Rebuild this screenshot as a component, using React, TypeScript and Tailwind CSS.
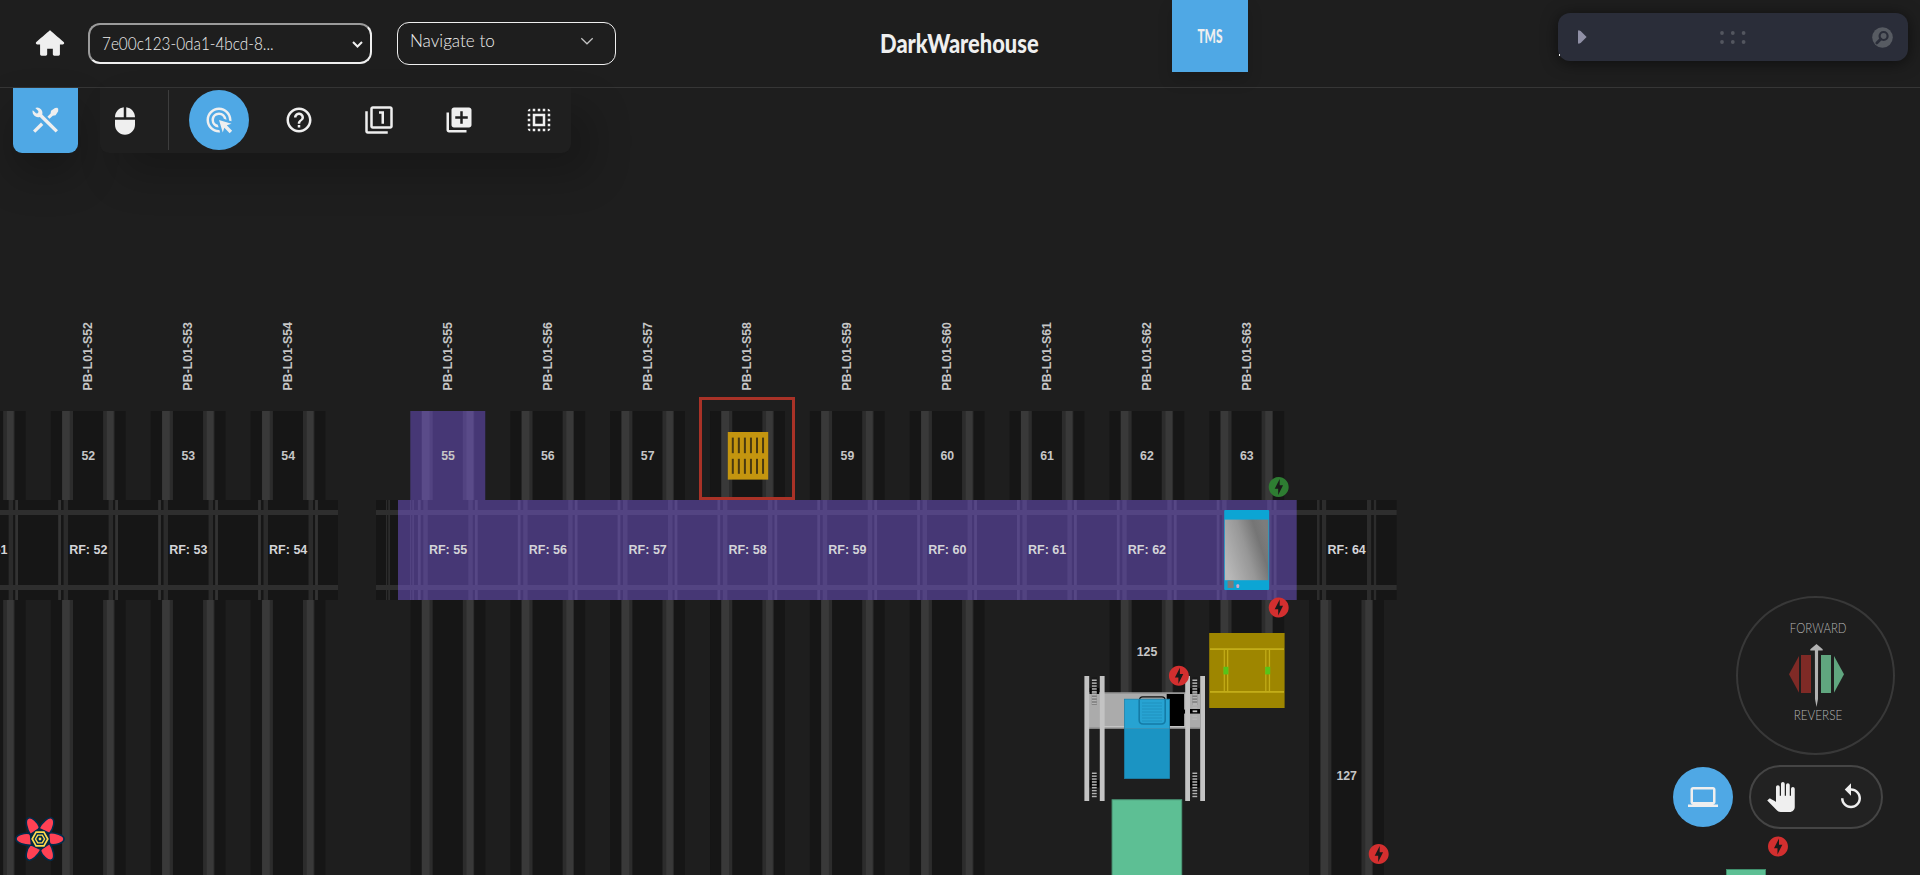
import React from "react";
import {
  MdAddToPhotos,
  MdAdsClick,
  MdHelpOutline,
  MdLaptop,
  MdMouse,
  MdOutlineFilter1,
  MdPanTool,
  MdReplay,
  MdSelectAll,
} from "react-icons/md";
import { TiHome } from "react-icons/ti";

const BOLT =
  "M12 2.02c-5.51 0-9.98 4.47-9.98 9.98s4.47 9.98 9.98 9.98 9.98-4.47 9.98-9.98S17.51 2.02 12 2.02zM11.48 20v-6.26H8L13 4v6.26h3.35L11.48 20z";

const leftSlots = [51, 52, 53, 54].map((n) => ({ n, cx: 88.2 + (n - 52) * 99.95 }));
const rightSlots = [55, 56, 57, 58, 59, 60, 61, 62, 63].map((n) => ({
  n,
  cx: 447.9 + (n - 55) * 99.85,
}));
const slots = [...leftSlots, ...rightSlots];

function Lane({ cx, y, h }: { cx: number; y: number; h: number }) {
  return (
    <g>
      <rect x={cx - 37.4} y={y} width={74.8} height={h} fill="#161616" />
      <rect x={cx - 26.2} y={y} width={11} height={h} fill="#2c2c2c" />
      <rect x={cx - 26} y={y} width={7.6} height={h} fill="#393939" />
      <rect x={cx + 14.9} y={y} width={11.4} height={h} fill="#2c2c2c" />
      <rect x={cx + 18.6} y={y} width={6.7} height={h} fill="#393939" />
    </g>
  );
}

function Crossing({ cx }: { cx: number }) {
  return (
    <g>
      <rect x={cx - 30} y={500} width={2.8} height={100} fill="#333333" />
      <rect x={cx - 24.6} y={500} width={4.5} height={100} fill="#2b2b2b" />
      <rect x={cx + 20.4} y={500} width={4.5} height={100} fill="#2b2b2b" />
      <rect x={cx + 27} y={500} width={2.8} height={100} fill="#333333" />
    </g>
  );
}

function Bolt({ x, y, color }: { x: number; y: number; color: string }) {
  return (
    <g transform={`translate(${x - 12} ${y - 12})`}>
      <circle cx={12} cy={12} r={9} fill="#1a1a1a" />
      <path d={BOLT} fill={color} />
    </g>
  );
}

function Ladder({ x, y, count }: { x: number; y: number; count: number }) {
  return (
    <g>
      {Array.from({ length: count }, (_, i) => (
        <rect key={i} x={x - 2.4} y={y + i * 2.9} width={4.8} height={1.5} fill="#b4b4b4" />
      ))}
    </g>
  );
}

function Hub({ x, y, h }: { x: number; y: number; h: number }) {
  return <rect x={x - 4.8} y={y} width={9.6} height={h} fill="#050505" />;
}

function Vehicle() {
  return (
    <g>
      <rect x={1089} y={692.5} width={111} height={36} fill="#ababab" />
      <rect x={1089} y={692.5} width={111} height={1.2} fill="#8f8f8f" />
      <rect x={1089} y={727.3} width={111} height={1.4} fill="#909090" />
      <rect x={1104} y={726} width={81} height={1.3} fill="#c4c4c4" />
      <rect x={1166.7} y={694} width={17.4} height={32} fill="#000" />
      <rect x={1139.6} y={696.8} width={25.4} height={27.5} rx={3} fill="#a0a0a0" stroke="#111" strokeWidth={1.2} />
      {[1094.3, 1194.8].map((x) => (
        <g key={x}>
          <Hub x={x} y={688} h={6} />
          <Hub x={x} y={780} h={7.5} />
        </g>
      ))}
      <rect x={1091.8} y={677} width={5} height={15} fill="#1a1a1a" />
      <rect x={1192.3} y={677} width={5} height={15} fill="#1a1a1a" />
      {[1094.3, 1194.8].map((x) => (
        <g key={x}>
          <rect x={x - 2.5} y={772} width={5} height={24} fill="#111" />
          <Ladder x={x} y={772.5} count={9} />
          <rect x={x - 2.5} y={692} width={5} height={13} fill="#777" />
          <Ladder x={x} y={679.5} count={9} />
        </g>
      ))}
      <Ladder x={1194.8} y={704} count={6} />
      <rect x={1183.6} y={709.6} width={1.6} height={4} fill="#000" />
      <rect x={1190} y={709} width={10} height={4.6} fill="#000" />
      <rect x={1192.6} y={710.4} width={4.6} height={1.8} fill="#c4c4c4" />
      {[1084.4, 1099.8, 1185.2, 1200.2].map((x) => (
        <rect key={x} x={x} y={676} width={4.8} height={125} fill="#c3c3c3" />
      ))}
      <rect x={1124.6} y={699.2} width={45} height={29.3} fill="#27a3d2" />
      <rect x={1124.6} y={728.5} width={45} height={50} fill="#1b94c3" />
      <rect x={1124.6} y={699.2} width={45} height={79.3} fill="none" stroke="#1b83ad" strokeWidth={0.8} />
      <path
        d="M1139.2 699.6v20.4q0 4 4 4h18q4 0 4-4v-20.4"
        fill="none"
        stroke="#147ba6"
        strokeWidth={1.6}
      />
      <path
        d="M1142 703h20M1142 706h20M1142 709h20M1142 712h20M1142 715h20M1142 718h20M1142 721h20"
        fill="none"
        stroke="#2192bf"
        strokeWidth={1}
      />
    </g>
  );
}

function WarehouseMap() {
  return (
    <svg className="block h-[875px] w-[1920px]" viewBox="0 0 1920 875" fontFamily="'Liberation Sans', Arial, sans-serif">
      <defs>
        <linearGradient id="shuttle" x1="0" y1="0.75" x2="1" y2="0.3">
          <stop offset="0" stopColor="#b9b9b9" />
          <stop offset="0.5" stopColor="#979797" />
          <stop offset="0.8" stopColor="#757575" />
          <stop offset="1" stopColor="#7c7c7c" />
        </linearGradient>
      </defs>

      {slots.map(({ n, cx }) => (
        <Lane key={n} cx={cx} y={411} h={89} />
      ))}
      {slots
        .filter(({ n }) => n <= 60)
        .map(({ n, cx }) => (
          <Lane key={n} cx={cx} y={600} h={275} />
        ))}
      <Lane cx={1146.9} y={600} h={93} />
      <Lane cx={1246.7} y={600} h={34} />
      <Lane cx={1346.6} y={600} h={275} />

      <rect x={0} y={500} width={338} height={100} fill="#161616" />
      <rect x={376} y={500} width={1020.7} height={100} fill="#161616" />
      {slots.map(({ n, cx }) => (
        <Crossing key={n} cx={cx} />
      ))}
      <g fill="#2c2c2c">
        <rect x={386} y={500} width={1.2} height={100} />
        <rect x={388.2} y={500} width={1.8} height={100} />
        <rect x={410} y={500} width={1.2} height={100} />
        <rect x={412.2} y={500} width={1.8} height={100} />
        <rect x={1317} y={500} width={2.6} height={100} />
        <rect x={1322} y={500} width={4.2} height={100} />
        <rect x={1367} y={500} width={4.2} height={100} />
        <rect x={1373.8} y={500} width={2.4} height={100} />
      </g>
      <g fill="#2e2e2e">
        <rect x={0} y={510} width={338} height={5} />
        <rect x={0} y={585} width={338} height={5} />
        <rect x={376} y={510} width={1020.7} height={5} />
        <rect x={376} y={585} width={1020.7} height={5} />
      </g>
      <g fill="#8463f0" fillOpacity={0.44}>
        <rect x={410.3} y={411} width={75} height={89} />
        <rect x={398} y={500} width={898.7} height={100} />
      </g>

      <g fill="#c6c6c6" fontSize={12.3} fontWeight={700}>
        {slots
          .filter(({ n }) => n > 51)
          .map(({ n, cx }) => (
            <g key={n}>
              <text transform={`translate(${cx + 4} 390.4) rotate(-90)`}>{`PB-L01-S${n}`}</text>
              {n !== 58 && (
                <text x={cx + 0.1} y={459.6} textAnchor="middle">
                  {n}
                </text>
              )}
            </g>
          ))}
        <text x={1147} y={656.4} textAnchor="middle">125</text>
        <text x={1346.7} y={779.8} textAnchor="middle">127</text>
      </g>
      <g fill="#d4d4d8" fontSize={12.5} fontWeight={700}>
        {[...slots.filter(({ n }) => n !== 63), { n: 64, cx: 1346.6 }].map(({ n, cx }) => (
          <text key={n} x={cx + 0.1} y={553.7} textAnchor="middle">{`RF: ${n}`}</text>
        ))}
      </g>

      {/* pallet and its selection frame */}
      <rect x={727.8} y={432} width={40.4} height={47.6} fill="#c4950f" />
      {Array.from({ length: 6 }, (_, i) => (
        <g key={i} fill="#4a3a10">
          <rect x={731.8 + i * 6.05} y={437.6} width={2} height={15.6} />
          <rect x={731.8 + i * 6.05} y={458.8} width={2} height={15} />
        </g>
      ))}
      <rect x={700.5} y={398.5} width={93} height={100} fill="none" stroke="#a93227" strokeWidth={3} />

      {/* shuttle */}
      <rect x={1224.2} y={510} width={45} height={80} rx={1} fill="#0ca5d4" />
      <rect x={1224.8} y={519.6} width={43.6} height={60.6} fill="url(#shuttle)" />
      <rect x={1227.6} y={580.6} width={6} height={7.4} fill="#7b7b7b" />
      <rect x={1236.4} y={584.2} width={2.8} height={3.8} rx={1} fill="#d6a9c9" />

      {/* lift */}
      <rect x={1209.2} y={633} width={75.4} height={75} fill="#9e8600" />
      <g fill="#c3ad18">
        <rect x={1210} y={648.2} width={74} height={1.8} />
        <rect x={1210} y={691} width={74} height={1.8} />
        <rect x={1223.7} y={650} width={1.2} height={41} />
        <rect x={1227} y={650} width={1.3} height={41} />
        <rect x={1265.2} y={650} width={1.2} height={41} />
        <rect x={1268.8} y={650} width={1.3} height={41} />
      </g>
      <rect x={1223.4} y={666.8} width={5} height={7.6} fill="#56c41a" />
      <rect x={1265.2} y={666.8} width={5} height={7.6} fill="#56c41a" />

      <Vehicle />
      <rect x={1112.1} y={799.8} width={69.6} height={80} fill="#5dbf94" stroke="#4d9c7a" strokeWidth={1} />
      <rect x={1726.5} y={869.5} width={39} height={10} fill="#5dbf94" stroke="#3f8f6c" strokeWidth={1} />

      <Bolt x={1278.7} y={487} color="#2e7d32" />
      <Bolt x={1278.7} y={607.6} color="#d32f2f" />
      <Bolt x={1178.9} y={675.7} color="#d32f2f" />
      <Bolt x={1378.7} y={854} color="#d32f2f" />
      <Bolt x={1778} y={846.4} color="#d32f2f" />
    </svg>
  );
}

function Header() {
  return (
    <header className="flex h-[88px] items-start border-b border-[#363636] bg-[#1e1e1e]">
      <TiHome className="mt-[26px] ml-[33px] size-[34px] shrink-0 text-[#efefef]" />
      <div className="mt-[23px] ml-[21px] flex h-[41px] w-[284px] shrink-0 items-center justify-between rounded-[12px] border-2 border-t-[#9b9b9b] border-r-[#efefef] border-b-[#efefef] border-l-[#9b9b9b] pr-[6px] pl-[12px]">
        <span className="mt-[2px] w-[172px] origin-left scale-x-[0.875] text-[17.5px] font-light whitespace-nowrap text-[#efefef]">
          7e00c123-0da1-4bcd-8...
        </span>
        <svg className="mt-[2px] h-[9px] w-[13px]" viewBox="0 0 13 9">
          <path d="M2 2l4.5 4.5L11 2" fill="none" stroke="#efefef" strokeWidth="2" />
        </svg>
      </div>
      <div className="mt-[22px] ml-[25px] flex h-[43px] w-[219px] shrink-0 justify-between rounded-[12px] border border-[#efefef] pr-[21px] pl-[12px]">
        <span className="mt-[4px] origin-left scale-x-[0.95] text-[18px] leading-[26px] font-light whitespace-nowrap text-[#efefef]">
          Navigate to
        </span>
        <svg className="mt-[14px] h-[8px] w-[14px]" viewBox="0 0 14 8">
          <path d="M1.3 1.2L7 6.8l5.7-5.6" fill="none" stroke="#c4c4c4" strokeWidth="1.2" />
        </svg>
      </div>
      <h1 className="mt-[26px] ml-[264px] w-[160px] shrink-0 origin-left scale-x-[0.81] text-[27px] leading-[34px] font-black whitespace-nowrap text-[#efefef]">
        DarkWarehouse
      </h1>
      <div className="ml-[132px] flex h-[72px] w-[76px] shrink-0 items-center justify-center bg-[#4fa8e5] shadow-[0_8px_14px_rgba(0,0,0,0.15)]">
        <span className="scale-x-[0.66] text-[18px] font-black text-[#efefef]">TMS</span>
      </div>
      <div className="mt-[13px] ml-[310px] flex h-[48px] w-[350px] shrink-0 items-center justify-between rounded-[12px] bg-[#2a2d39] pr-[15px] pl-[20px] shadow-[0_2px_16px_rgba(0,0,0,0.55)]">
        <svg className="h-[14px] w-[9px]" viewBox="0 0 9 14">
          <path d="M0 1.2Q0 0 1.3.4L2.6 1 8.6 7l-6 6-1.3.6Q0 14 0 12.8z" fill="#9090a6" />
        </svg>
        <svg className="mr-[2px] ml-[8px] h-[13px] w-[26px]" viewBox="0 0 26 13">
          {[2, 12.8, 23.6].map((x) => (
            <g key={x} fill="#53565f">
              <circle cx={x} cy={2} r={1.9} />
              <circle cx={x} cy={11} r={1.9} />
            </g>
          ))}
        </svg>
        <svg className="h-[21px] w-[21px]" viewBox="0 0 21 21">
          <circle cx="10.5" cy="10.5" r="10.3" fill="#575b62" />
          <circle cx="11.6" cy="9" r="4" fill="none" stroke="#2a2d39" strokeWidth="2.2" />
          <path d="M8.8 12L4.8 16" stroke="#2a2d39" strokeWidth="2.8" strokeLinecap="round" />
        </svg>
      </div>
      <span className="absolute top-[54px] left-[1559px] h-[2px] w-px bg-[#efefef]" />
    </header>
  );
}

function ToolsIcon() {
  return (
    <svg className="h-[27px] w-[27px]" viewBox="0 0 27 27">
      <path
        d="M2.200 4.600A4.600 4.600 0 0 0 8.600 9.400A4.600 4.600 0 0 0 6.200 1.600M2.200 4.600L5 5.600L7 3.600L6.200 1.600"
        fill="none"
        stroke="currentColor"
        strokeWidth="0.1"
      />
      <path
        d="M0.800 3.200L3.700 6.100Q4.800 6.900 5.800 5.900Q6.900 4.800 6.100 3.700L3.300 0.900Q6.500-.2 9 2.300Q11 4.600 10.200 7.400L26 23.200L23.600 25.600L7.800 9.900Q4.800 11 2.200 8.600Q-.2 6.100 0.800 3.200z"
        fill="currentColor"
      />
      <path d="M1 23.400L9 15.600L11.300 17.900L3.300 25.800z" fill="currentColor" />
      <path d="M25.200 0.800L26.200 1.800V4.200L23.600 8.300L20.800 8.700L17.500 11.800L15.400 9.700L18.600 6.500L19 3.700L23 0.900z" fill="currentColor" />
    </svg>
  );
}

function Toolbar() {
  return (
    <div className="flex h-[65px] items-start text-[#efefef]">
      <button className="ml-[13px] flex h-[65px] w-[65px] items-center justify-center rounded-b-[9px] bg-[#4fa8e5] pr-[1px] shadow-[0_22px_40px_rgba(0,0,0,0.25)]">
        <ToolsIcon />
      </button>
      <div className="ml-[22px] flex h-[65px] w-[471px] items-center rounded-b-[9px] bg-[#1f1f1f] shadow-[20px_22px_40px_rgba(0,0,0,0.22)]">
        <div className="mr-[28px] ml-[10px] flex size-[30px] items-center justify-center">
          <MdMouse className="size-[30px]" />
        </div>
        <div className="-mt-px h-[60px] w-px bg-[#3d3d3d]" />
        <div className="-mt-px ml-[20px] flex gap-[20px]">
          <span className="flex size-[60px] items-center justify-center rounded-full bg-[#4fa8e5]">
            <MdAdsClick className="size-[30px]" />
          </span>
          <span className="flex size-[60px] items-center justify-center">
            <MdHelpOutline className="size-[30px]" />
          </span>
          <span className="flex size-[60px] items-center justify-center">
            <MdOutlineFilter1 className="size-[30px]" />
          </span>
          <span className="flex size-[60px] items-center justify-center">
            <MdAddToPhotos className="size-[30px]" />
          </span>
          <span className="flex size-[60px] items-center justify-center">
            <MdSelectAll className="size-[30px]" />
          </span>
        </div>
      </div>
    </div>
  );
}

function Controls() {
  return (
    <div className="absolute right-[25px] bottom-[46px] flex flex-col items-end">
      <div className="mb-[10px] flex size-[159px] flex-col items-center rounded-full border-2 border-[#383838] bg-[#1e1e1e] text-[#b4b4b4]">
        <span className="mt-[20px] ml-[5px] scale-x-[0.88] text-[13px] leading-[20px] font-light">FORWARD</span>
        <svg className="mt-[6px] h-[64px] w-[56px]" viewBox="0 0 56 64">
          <path d="M1 30.3L11 12v36.7z" fill="#7f2a26" />
          <rect x="13" y="11" width="10" height="38" fill="#7f2a26" />
          <rect x="33" y="11" width="10" height="38" fill="#60a67f" />
          <path d="M46 12l10 18.3L46 48.7z" fill="#60a67f" />
          <path d="M28.5 0l6.2 5.2v1.3h-4.6L30 55l-1.5 8-1.5-8-.1-48.5h-4.6V5.200z" fill="#b2b2b2" />
        </svg>
        <span className="-mt-[3px] ml-[5px] scale-x-[0.9] text-[13px] leading-[20px] font-light">REVERSE</span>
      </div>
      <div className="mr-[12px] flex items-center gap-[16px] text-[#efefef]">
        <span className="flex size-[60px] items-center justify-center rounded-full bg-[#4fa8e5]">
          <MdLaptop className="size-[30px]" />
        </span>
        <div className="flex h-[64px] w-[134px] items-center rounded-full border-2 border-[#454545] bg-[#222222] pl-[15px]">
          <MdPanTool className="size-[30px]" />
          <MdReplay className="ml-[40px] size-[30px]" />
        </div>
      </div>
    </div>
  );
}

function QueryLogo() {
  return (
    <svg className="absolute top-[814px] left-[14px] h-[50px] w-[52px]" viewBox="-26 -25 52 50">
      {[0, 60, 120, 180, 240, 300].map((a) => (
        <path
          key={a}
          transform={`rotate(${a})`}
          d="M8.500 -6.200C15 -6.500 24 -4 24 0S15.500 6.800 9.500 5.400z"
          fill="#ff4154"
          stroke="#002c4b"
          strokeWidth="1.600"
          strokeLinejoin="round"
        />
      ))}
      <path d="M-9.800 0L-4.900 -8.500H4.900L9.800 0L4.900 8.500H-4.900z" fill="#002c4b" />
      <path d="M-7.800 0L-3.900 -6.800H3.900L7.800 0L3.900 6.800H-3.900z" fill="none" stroke="#ffd94c" strokeWidth="1.700" />
      <path d="M-4.500 0L-2.250 -3.900H2.250L4.500 0L2.250 3.900H-2.250z" fill="none" stroke="#ffd94c" strokeWidth="1.400" />
      <circle r="1.400" fill="#ffd94c" />
    </svg>
  );
}

export default function App() {
  return (
    <div className="relative h-[875px] w-[1920px] overflow-hidden bg-[#1e1e1e] font-['Lato','Open_Sans',sans-serif]">
      <div className="absolute inset-0">
        <WarehouseMap />
      </div>
      <div className="relative">
        <Header />
        <Toolbar />
      </div>
      <Controls />
      <QueryLogo />
    </div>
  );
}
